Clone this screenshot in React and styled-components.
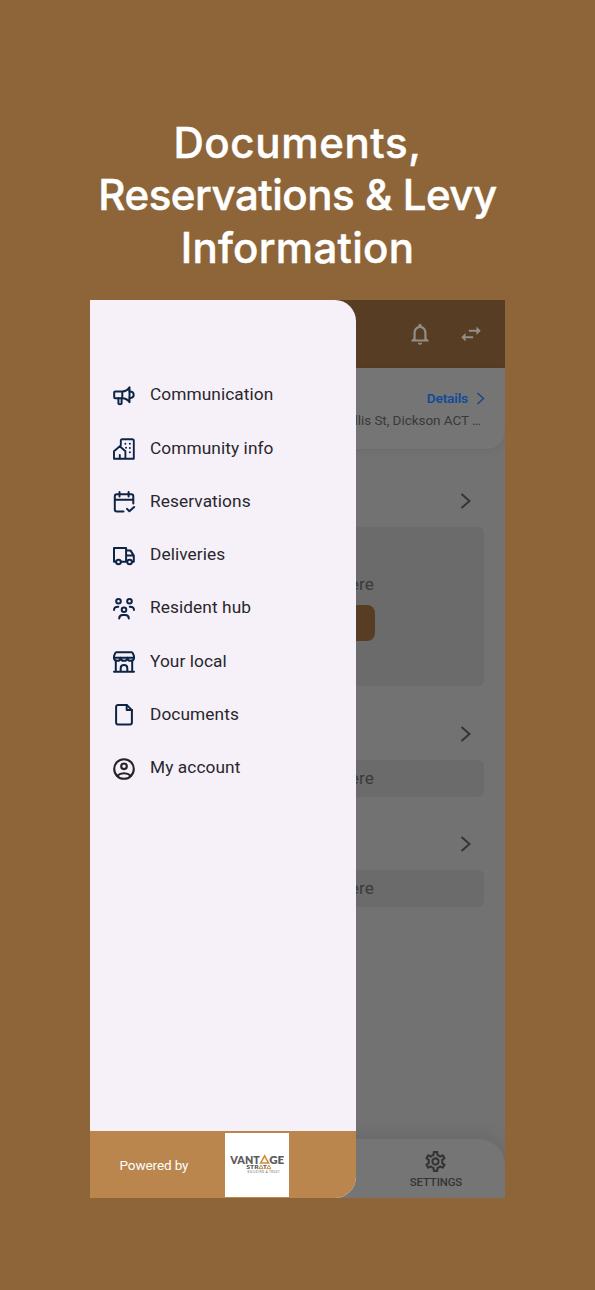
import React from 'react';
import styled, { createGlobalStyle } from 'styled-components';

const GlobalStyle = createGlobalStyle`
  * {
    box-sizing: border-box;
  }

  body {
    margin: 0;
    background: #8d6539;
    font-family: Roboto, 'Liberation Sans', sans-serif;
  }
`;

const Page = styled.main`
  width: 595px;
  height: 1290px;
  padding-top: 117px;
  overflow: hidden;
  background: #8d6539;
`;

const Title = styled.h1`
  display: flex;
  flex-direction: column;
  align-items: center;
  height: 183px;
  margin: 0;
  font-family: Inter, sans-serif;
  font-size: 42px;
  font-weight: 500;
  line-height: 52.3px;
  color: #fff;
  -webkit-text-stroke: 0.5px #fff;
`;

const TitleLine = styled.span`
  white-space: nowrap;
  letter-spacing: ${({ $spacing }) => $spacing}px;
`;

const Phone = styled.div`
  position: relative;
  width: 415px;
  height: 898px;
  margin-left: 90px;
  overflow: hidden;
`;

const Screen = styled.div`
  display: flex;
  flex-direction: column;
  height: 100%;
  background: #727272;
`;

const TopBar = styled.header`
  display: flex;
  justify-content: flex-end;
  align-items: center;
  gap: 25px;
  height: 68px;
  padding-right: 21px;
  background: #563d23;
`;

const AddressCard = styled.section`
  display: flex;
  flex-direction: column;
  align-items: flex-end;
  height: 81px;
  padding: 19px 20px 0 0;
  border-radius: 0 0 18px 18px;
  background: #757575;
  box-shadow: 0 2px 6px rgba(0, 0, 0, 0.06);
`;

const DetailsLink = styled.a`
  display: flex;
  align-items: center;
  gap: 8px;
  height: 22px;
  font-size: 13.7px;
  font-weight: 600;
  line-height: 22px;
  letter-spacing: -0.15px;
  color: #124b97;
`;

const Address = styled.p`
  margin: 2px 4px 0 0;
  font-size: 13.5px;
  line-height: 18px;
  letter-spacing: -0.05px;
  white-space: nowrap;
  color: #393939;
`;

const Content = styled.div`
  flex: 1;
  padding: 26px 21px 0;
`;

const SectionHead = styled.div`
  display: flex;
  justify-content: flex-end;
  align-items: center;
  height: 52px;
  padding-right: 13px;
`;

const Panel = styled.div`
  display: flex;
  flex-direction: column;
  align-items: center;
  justify-content: center;
  gap: 9px;
  height: ${({ $tall }) => ($tall ? 159 : 37)}px;
  margin-bottom: ${({ $tall }) => ($tall ? 22 : 21)}px;
  padding-bottom: 1px;
  border-radius: 6px;
  background: #6b6b6b;
`;

const PanelText = styled.p`
  width: 153px;
  margin: 0;
  font-size: 17.3px;
  line-height: 24px;
  letter-spacing: 0.1px;
  text-align: right;
  color: #3a3a3a;
`;

const PanelButton = styled.button`
  width: 155px;
  height: 36px;
  border: 0;
  border-radius: 8px;
  background: #563d23;
`;

const BottomNav = styled.nav`
  display: flex;
  justify-content: flex-end;
  height: 59px;
  padding: 10px 43px 0 0;
  border-radius: 26px 26px 0 0;
  background: #757575;
  box-shadow: 0 -3px 18px rgba(0, 0, 0, 0.1);
`;

const NavItem = styled.a`
  display: flex;
  flex-direction: column;
  align-items: center;
  gap: 1px;
  font-size: 11.3px;
  font-weight: 500;
  line-height: 16px;
  letter-spacing: -0.1px;
  color: #343434;
`;

const Drawer = styled.aside`
  position: absolute;
  top: 0;
  left: 0;
  display: flex;
  flex-direction: column;
  width: 266px;
  height: 100%;
  border-radius: 0 21px 21px 0;
  overflow: hidden;
  background: #f6f1f9;
`;

const Menu = styled.ul`
  flex: 1;
  margin: 0;
  padding: 67.7px 0 0 22px;
  list-style: none;
`;

const MenuItem = styled.li`
  display: flex;
  align-items: center;
  gap: 14px;
  height: 53.25px;
  font-size: 17.3px;
  letter-spacing: 0.08px;
  color: #29272c;

  svg {
    margin-top: 3px;
  }
`;

const DrawerFooter = styled.footer`
  display: flex;
  align-items: center;
  height: 67px;
  padding-left: 29.5px;
  background: #ba864d;
`;

const PoweredBy = styled.span`
  width: 105.5px;
  font-size: 13.5px;
  letter-spacing: -0.1px;
  color: #fff;
`;

const LogoBox = styled.div`
  width: 64px;
  height: 64px;
  background: #fff;
`;

const Icon = ({ color = '#0e2445', size = 24, stroke = 2, children }) => (
  <svg
    width={size}
    height={size}
    viewBox="0 0 24 24"
    fill="none"
    stroke={color}
    strokeWidth={stroke}
    strokeLinecap="round"
    strokeLinejoin="round"
  >
    {children}
  </svg>
);

const MegaphoneIcon = () => (
  <Icon>
    <path d="M3.200 7.400h7.100v6.800H3.200a1 1 0 0 1-1-1V8.400a1 1 0 0 1 1-1zM10.300 7.400c2.800 0 5.600-1.500 7.200-4v14.800c-1.600-2.500-4.400-4-7.200-4" />
    <path d="M17.500 7.500c2.900 0 4.200 1.300 4.200 3.300s-1.300 3.300-4.200 3.300" />
    <path d="M6.400 14.200v5.300c0 1 3.200 1 3.200 0v-5.300" />
  </Icon>
);

const BuildingIcon = () => (
  <Icon stroke={1.9}>
    <path d="M8.800 8.500V3.800c0-1 .6-1.600 1.600-1.600h9.800c1 0 1.600.6 1.600 1.600v17.900H2v-7.400l5.800-5 5.600 5v7.400" />
    <path d="M7.800 21.500v-3.600" />
    <path d="M13.300 6.800h.1M17.800 6.800h.1M17.800 11h.1M17.800 15.200h.1M14 10.800h.1" />
  </Icon>
);

const CalendarIcon = () => (
  <Icon>
    <path d="M11.500 21.500H4.800A2 2 0 0 1 2.800 19.500V6.200a2 2 0 0 1 2-2h14.500a2 2 0 0 1 2 2v7.300M2.800 9.800h18.500M7.500 1.900v4.500M16.600 1.900v4.500" />
    <path d="M15 18.900l2.400 2.400 4.700-4.300" />
  </Icon>
);

const TruckIcon = () => (
  <Icon>
    <path d="M4 17.800H2V4h12.100v13.800H9M14.100 6.600h4.500l3.200 5v6.200h-1.500M14.100 11.400h7.500" />
    <circle cx="6.500" cy="18" r="2.300" />
    <circle cx="17.600" cy="18" r="2.300" />
  </Icon>
);

const PeopleIcon = () => (
  <Icon>
    <circle cx="6.500" cy="4.300" r="2.300" />
    <circle cx="17.500" cy="4.300" r="2.300" />
    <circle cx="12" cy="12.700" r="2.300" />
    <path d="M2 13c0-2.400 1.200-3.300 4.300-3.300M22 13c0-2.400-1.200-3.300-4.300-3.300M7.200 21.500c0-2.500 1.200-3.500 3.400-3.500h2.800c2.200 0 3.400 1 3.400 3.500" />
  </Icon>
);

const StoreIcon = () => (
  <Icon>
    <path d="M4.400 2.200h15.200c.6 0 1 .3 1.200.9L22 6.200v1.500H2V6.200l1.200-3.100c.2-.6.600-.9 1.200-.9z" />
    <path d="M2 7.700c0 4.200 6.600 4.200 6.600 0 0 4.200 6.800 4.200 6.800 0 0 4.200 6.600 4.200 6.600 0" />
    <path d="M3.800 11v10.600M20.200 11v10.600M2 21.700h20M8.700 21.500v-3.300c0-4.200 6.600-4.200 6.600 0v3.300" />
  </Icon>
);

const FileIcon = () => (
  <Icon>
    <path d="M14.700 1.900H6a1.900 1.900 0 0 0-1.900 1.900v15.700A1.900 1.900 0 0 0 6 21.400h12a1.900 1.900 0 0 0 1.900-1.900V7.100z" />
    <path d="M14.700 1.900v5.200h5.200" />
  </Icon>
);

const AccountIcon = () => (
  <Icon color="#242227" stroke={2.100}>
    <circle cx="12" cy="12" r="9.800" />
    <circle cx="12" cy="9.300" r="2.800" />
    <path d="M5.200 18.700c3.700-3.300 9.900-3.300 13.600 0" />
  </Icon>
);

const Chevron = ({ width, height, color, stroke }) => (
  <svg width={width} height={height} viewBox={`0 0 ${width} ${height}`} fill="none" stroke={color} strokeWidth={stroke}>
    <path d={`M1.500 1l${width - 3} ${height / 2 - 1}l-${width - 3} ${height / 2 - 1}`} />
  </svg>
);

const BellIcon = () => (
  <svg width="26" height="26" viewBox="0 0 24 24" fill="#938d86">
    <path d="M12 22c1.100 0 2-.9 2-2h-4c0 1.100.9 2 2 2zm6-6v-5c0-3.070-1.630-5.640-4.500-6.320V4c0-.83-.67-1.500-1.500-1.500s-1.500.67-1.500 1.500v.68C7.640 5.360 6 7.920 6 11v5l-2 2v1h16v-1l-2-2zm-2 1H8v-6c0-2.480 1.510-4.500 4-4.500s4 2.020 4 4.500v6z" />
  </svg>
);

const SwapIcon = () => (
  <svg width="26" height="26" viewBox="0 0 24 24" fill="#938d86">
    <path d="M6.990 11L3 15l3.990 4v-3H14v-2H6.990v-3zM21 9l-3.990-4v3H10v2h7.010v3L21 9z" />
  </svg>
);

const GearIcon = () => (
  <svg width="25" height="25" viewBox="0 0 24 24" fill="#343434">
    <path d="M19.430 12.980c.04-.32.07-.64.07-.98s-.03-.66-.07-.98l2.110-1.650c.19-.15.24-.42.12-.64l-2-3.460c-.09-.16-.26-.25-.44-.25-.06 0-.12.01-.17.03l-2.490 1c-.52-.4-1.080-.73-1.690-.98l-.38-2.650C14.460 2.180 14.250 2 14 2h-4c-.25 0-.46.18-.49.42l-.38 2.650c-.61.25-1.170.59-1.690.98l-2.490-1c-.06-.02-.12-.03-.18-.03-.17 0-.34.09-.43.25l-2 3.460c-.13.22-.07.49.12.64l2.110 1.650c-.04.32-.07.65-.07.98s.03.66.07.98l-2.110 1.650c-.19.15-.24.42-.12.64l2 3.460c.09.16.26.25.44.25.06 0 .12-.01.17-.03l2.490-1c.52.4 1.080.73 1.690.98l.38 2.650c.03.24.24.42.49.42h4c.25 0 .46-.18.49-.42l.38-2.650c.61-.25 1.170-.59 1.690-.98l2.490 1c.06.02.12.03.18.03.17 0 .34-.09.43-.25l2-3.460c.12-.22.07-.49-.12-.64l-2.110-1.650zm-1.980-1.710c.04.31.05.52.05.73 0 .21-.02.43-.05.73l-.14 1.130.89.7 1.080.84-.7 1.210-1.270-.51-1.040-.42-.9.68c-.43.32-.84.56-1.250.73l-1.060.43-.16 1.130-.2 1.350h-1.400l-.19-1.350-.16-1.130-1.060-.43c-.43-.18-.83-.41-1.230-.71l-.91-.7-1.060.43-1.270.51-.7-1.210 1.080-.84.89-.7-.14-1.130c-.03-.31-.05-.54-.05-.74s.02-.43.05-.73l.14-1.130-.89-.7-1.080-.84.7-1.210 1.270.51 1.040.42.9-.68c.43-.32.84-.56 1.250-.73l1.060-.43.16-1.130.2-1.350h1.390l.19 1.350.16 1.130 1.060.43c.43.18.83.41 1.230.71l.91.7 1.060-.43 1.270-.51.7 1.210-1.070.85-.89.7.14 1.130zM12 8c-2.210 0-4 1.790-4 4s1.790 4 4 4 4-1.790 4-4-1.790-4-4-4zm0 6c-1.100 0-2-.9-2-2s.9-2 2-2 2 .9 2 2-.9 2-2 2z" />
  </svg>
);

const VantageLogo = () => (
  <svg width="64" height="64" viewBox="0 0 64 64" fontFamily="Lato, sans-serif" fontWeight="800" fill="#5d5d60">
    <text x="5.300" y="30.600" fontSize="11" textLength="29.500" lengthAdjust="spacingAndGlyphs">VANT</text>
    <text x="44.200" y="30.600" fontSize="11" textLength="15" lengthAdjust="spacingAndGlyphs">GE</text>
    <path d="M35.600 30.100l4-7.300 4 7.300z" fill="none" stroke="#cd8a3c" strokeWidth="1.500" />
    <text x="21.300" y="36.200" fontSize="6" textLength="12.500" lengthAdjust="spacingAndGlyphs">STR</text>
    <text x="38.100" y="36.200" fontSize="6" textLength="3.800" lengthAdjust="spacingAndGlyphs">T</text>
    <path d="M34.100 35.700l2-3.600 2 3.600zM41.900 35.700l2-3.600 2 3.600z" fill="none" stroke="#cd8a3c" />
    <text x="22.600" y="40.300" fontSize="2.700" fontWeight="400" textLength="32">BUILDING A TRUST</text>
  </svg>
);

const menuItems = [
  { label: 'Communication', icon: <MegaphoneIcon /> },
  { label: 'Community info', icon: <BuildingIcon /> },
  { label: 'Reservations', icon: <CalendarIcon /> },
  { label: 'Deliveries', icon: <TruckIcon /> },
  { label: 'Resident hub', icon: <PeopleIcon /> },
  { label: 'Your local', icon: <StoreIcon /> },
  { label: 'Documents', icon: <FileIcon /> },
  { label: 'My account', icon: <AccountIcon /> },
];

const Section = ({ tall }) => (
  <>
    <SectionHead>
      <Chevron width={11} height={16} color="#343434" stroke={2} />
    </SectionHead>
    <Panel $tall={tall}>
      <PanelText>here</PanelText>
      {tall && <PanelButton aria-label="Add" />}
    </Panel>
  </>
);

const App = () => {
  return (
    <Page>
      <GlobalStyle />
      <Title>
        <TitleLine $spacing={0.65}>Documents,</TitleLine>
        <TitleLine $spacing={-0.45}>Reservations &amp; Levy</TitleLine>
        <TitleLine $spacing={0.3}>Information</TitleLine>
      </Title>
      <Phone>
        <Screen>
          <TopBar>
            <BellIcon />
            <SwapIcon />
          </TopBar>
          <AddressCard>
            <DetailsLink>
              Details
              <Chevron width={9} height={13} color="#17477f" stroke={1.4} />
            </DetailsLink>
            <Address>Challis St, Dickson ACT …</Address>
          </AddressCard>
          <Content>
            <Section tall />
            <Section />
            <Section />
          </Content>
          <BottomNav>
            <NavItem>
              <GearIcon />
              SETTINGS
            </NavItem>
          </BottomNav>
        </Screen>
        <Drawer>
          <Menu>
            {menuItems.map(({ label, icon }) => (
              <MenuItem key={label}>
                {icon}
                {label}
              </MenuItem>
            ))}
          </Menu>
          <DrawerFooter>
            <PoweredBy>Powered by</PoweredBy>
            <LogoBox>
              <VantageLogo />
            </LogoBox>
          </DrawerFooter>
        </Drawer>
      </Phone>
    </Page>
  );
};

export default App;
